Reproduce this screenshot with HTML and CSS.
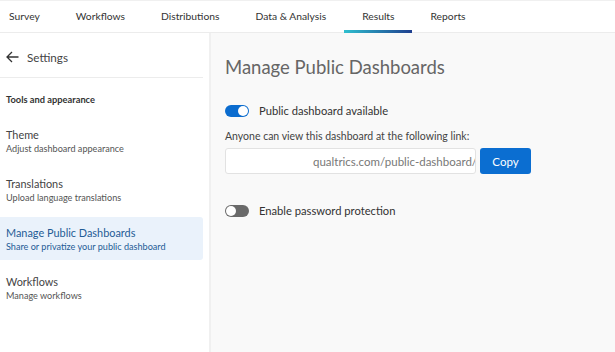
FILE: index.html
```html
<!DOCTYPE html>
<html>
<head>
<meta charset="utf-8">
<link rel="stylesheet" href="styles.css">
</head>
<body>
<nav class="topnav">
  <a class="tab">Survey</a>
  <a class="tab">Workflows</a>
  <a class="tab">Distributions</a>
  <a class="tab">Data &amp; Analysis</a>
  <a class="tab active">Results</a>
  <a class="tab">Reports</a>
</nav>
<div class="page">
  <aside class="sidebar">
    <div class="back">
      <svg class="arrow" width="13" height="12" viewBox="0 0 13 12"><path d="M12.5 6H1M6 1L1 6l5 5" fill="none" stroke="#333" stroke-width="1.3"/></svg>
      <span>Settings</span>
    </div>
    <div class="section">Tools and appearance</div>
    <div class="item"><div class="title">Theme</div><div class="sub">Adjust dashboard appearance</div></div>
    <div class="item"><div class="title">Translations</div><div class="sub">Upload language translations</div></div>
    <div class="item selected"><div class="title">Manage Public Dashboards</div><div class="sub">Share or privatize your public dashboard</div></div>
    <div class="item"><div class="title">Workflows</div><div class="sub">Manage workflows</div></div>
  </aside>
  <main class="main">
    <h1>Manage Public Dashboards</h1>
    <div class="toggle-row">
      <span class="switch on"></span>
      <span>Public dashboard available</span>
    </div>
    <p class="hint">Anyone can view this dashboard at the following link:</p>
    <div class="link-row">
      <div class="field"><span class="url">qualtrics.com/public-dashboard/v</span></div>
      <button class="copy">Copy</button>
    </div>
    <div class="toggle-row second">
      <span class="switch"></span>
      <span>Enable password protection</span>
    </div>
  </main>
</div>
</body>
</html>
```
FILE: styles.css
```css
* { box-sizing: border-box; }
html, body { margin: 0; height: 100%; }
body {
  font-family: Lato, "Noto Sans", sans-serif;
  color: #333;
  background: #f9f9f9;
  display: flex;
  flex-direction: column;
  overflow: hidden;
}
.topnav {
  height: 33px;
  background: #fff;
  border-top: 1px solid #f0f0f0;
  border-bottom: 1px solid #ececec;
  display: flex;
  font-size: 10.3px;
}
.tab {
  display: flex;
  align-items: center;
  padding: 0 18px 1px;
  color: #333;
  position: relative;
}
.tab:first-child { padding-left: 9px; }
.tab.active::after {
  content: "";
  position: absolute;
  left: 0; right: 0; bottom: -1px;
  height: 3px;
  background: linear-gradient(90deg, #2fbfcf, #1f3f8f);
}
.page { flex: 1; display: flex; }
.sidebar {
  width: 211px;
  background: #fff;
  border-right: 2px solid #f0f0f0;
  padding-right: 6px;
}
.back {
  height: 45px;
  display: flex;
  align-items: center;
  gap: 8px;
  padding: 3px 0 0 6px;
  font-size: 11.7px;
  color: #444;
  border-bottom: 1px solid #ececec;
}
.section {
  font-size: 9.3px;
  font-weight: 700;
  color: #333;
  padding: 16px 6px 0;
  height: 38px;
}
.item {
  padding: 8px 6px;
  height: 49px;
  display: flex;
  flex-direction: column;
  justify-content: center;
}
.item .title { font-size: 10.9px; color: #444; line-height: 15px; }
.item .sub { font-size: 9.1px; color: #555; line-height: 13px; }
.item.selected { background: #eaf2fb; border-radius: 0 3px 3px 0; height: 43px; margin: 3px 0; }
.item.selected .title, .item.selected .sub { color: #1f5c96; }
.main {
  flex: 1;
  padding: 0 14px;
}
h1 {
  font-weight: 400;
  font-size: 18.5px;
  color: #666;
  margin: 21px 0 0;
  line-height: 26px;
}
.toggle-row {
  display: flex;
  align-items: center;
  gap: 10px;
  font-size: 11.2px;
  margin-top: 24px;
  color: #333;
}
.toggle-row.second { margin-top: 30px; }
.switch {
  width: 24px; height: 12px;
  border-radius: 6px;
  background: #6a6a6a;
  position: relative;
}
.switch::after {
  content: "";
  position: absolute;
  top: 1px; left: 1px;
  width: 10px; height: 10px;
  border-radius: 50%;
  background: #fff;
}
.switch.on { background: #0b6ccf; }
.switch.on::after { left: 13px; }
.hint { font-size: 10.5px; color: #444; margin: 12px 0 5px; line-height: 14px; }
.link-row { display: flex; gap: 4px; align-items: stretch; }
.field {
  width: 251px; height: 26px;
  border: 1px solid #e2e2e2;
  border-radius: 3px;
  background: #fff;
  display: flex;
  align-items: center;
  overflow: hidden;
  white-space: nowrap;
  font-size: 11.5px;
  color: #777;
  padding-left: 87px;
}
.copy {
  width: 51px; height: 26px;
  border: none;
  border-radius: 3px;
  background: #0b6ed1;
  color: #fff;
  font-family: inherit;
  font-size: 11.5px;
}
```
